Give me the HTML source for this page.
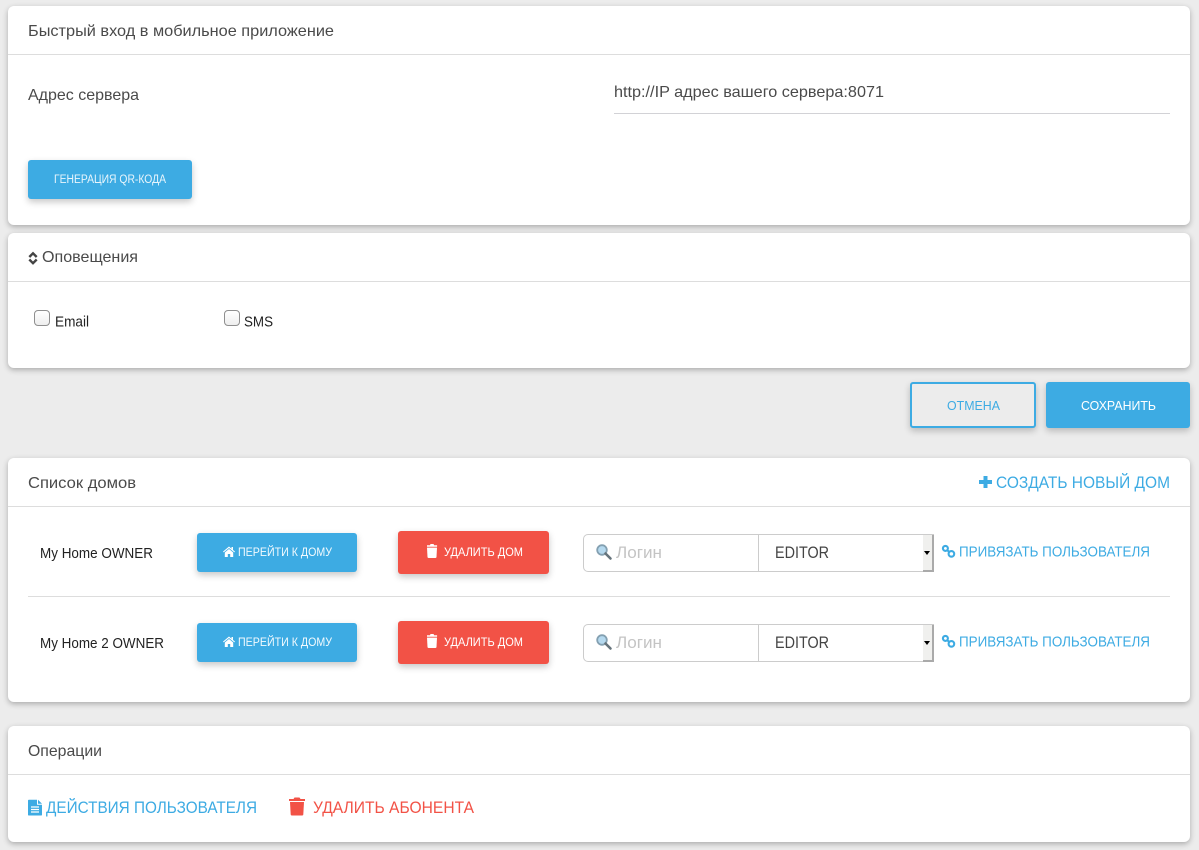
<!DOCTYPE html>
<html lang="ru">
<head>
<meta charset="utf-8">
<title>Настройки</title>
<style>
html,body{margin:0;padding:0;background:#ececec;width:1199px;height:850px;overflow:hidden}
.card{position:absolute;left:8px;width:1182px;background:#fff;border-radius:6px;box-shadow:0 2px 6px rgba(0,0,0,.28)}
.hr{position:absolute;left:0;width:1182px;height:1px;background:#ddd}
.btn{position:absolute;border-radius:3px;background:#3dabe3;box-shadow:0 3px 7px rgba(0,0,0,.22)}
.red{background:#f25246}
.cancel{background:#ececec;border:2px solid #3dabe3;box-sizing:border-box}
.cb{position:absolute;width:14px;height:14px;border:1px solid #8f8f8f;border-radius:4px;background:linear-gradient(#fff,#eee)}
.group{position:absolute;left:583px;width:349px;height:36px;border:1px solid #ccc;border-radius:5px 0 0 5px;background:#fff}
.div{position:absolute;left:174px;top:0;width:1px;height:36px;background:#ccc}
.sb{position:absolute;right:-1px;top:0;width:11px;height:37px;background:#f0f0ee;border-right:2px solid #aaa;border-bottom:2px solid #aaa;box-sizing:border-box}
.sb:after{content:"";position:absolute;left:1px;top:16px;border:3px solid transparent;border-top:4px solid #000;border-bottom:0}
.line{position:absolute;left:28px;width:1142px;height:1px;background:#ddd}
svg{position:absolute;left:0;top:0}
text{font-family:"Liberation Sans","DejaVu Sans",sans-serif}
</style>
</head>
<body>
<div class="card" style="top:6px;height:219px"><div class="hr" style="top:48px"></div></div>
<div class="card" style="top:233px;height:135px"><div class="hr" style="top:48px"></div></div>
<div class="card" style="top:458px;height:244px"><div class="hr" style="top:48px"></div></div>
<div class="card" style="top:726px;height:116px"><div class="hr" style="top:48px"></div></div>

<div style="position:absolute;left:614px;top:113px;width:556px;height:1px;background:#d2d2d6"></div>
<div class="btn" style="left:28px;top:160px;width:164px;height:39px"></div>
<div class="cb" style="left:34px;top:310px"></div>
<div class="cb" style="left:224px;top:310px"></div>
<div class="btn cancel" style="left:910px;top:382px;width:126px;height:46px"></div>
<div class="btn" style="left:1046px;top:382px;width:144px;height:46px"></div>

<div class="btn" style="left:197px;top:533px;width:160px;height:39px"></div>
<div class="btn red" style="left:398px;top:531px;width:151px;height:43px"></div>
<div class="group" style="top:534px"><div class="div"></div><div class="sb"></div></div>
<div class="line" style="top:596px"></div>
<div class="btn" style="left:197px;top:623px;width:160px;height:39px"></div>
<div class="btn red" style="left:398px;top:621px;width:151px;height:43px"></div>
<div class="group" style="top:624px"><div class="div"></div><div class="sb"></div></div>

<svg width="1199" height="850" viewBox="0 0 1199 850" xmlns="http://www.w3.org/2000/svg">
<defs>
<g id="home"><path d="M6 .5 0 5.600l.7.8L6 2l5.300 4.400.7-.8-2-1.700V1H8.500v1.700z" fill="#fff"/><path d="M6 3 1.800 6.500V11h3V8h2.400v3h3V6.500z" fill="#fff"/></g>
<g id="trash"><path d="M3.500 1.300 4.200 0h3.600l.7 1.300H12v1.500H0V1.300z" fill="#fff" transform="translate(1 0) scale(.84 1)"/><path d="M1 3.600h10l-.5 9.400q-.1 1-1.100 1H2.600q-1 0-1.100-1z" fill="#fff"/></g>
<g id="lens"><circle cx="6" cy="6" r="4.800" fill="#b5d9ef" stroke="#84a0b1" stroke-width="1.800"/><path d="M9.500 9.500 14.500 14.500" stroke="#66747c" stroke-width="2.600" stroke-linecap="round"/></g>
<g id="link" fill="none" stroke="#3dabe3" stroke-width="2.100"><circle cx="3.400" cy="3.400" r="2.500"/><circle cx="9.400" cy="8.900" r="2.800"/><path d="M5.200 5.200 7.400 7"/></g>
</defs>

<g fill="#4a4a4a" font-size="16">
<text x="28" y="36" textLength="306" lengthAdjust="spacingAndGlyphs">Быстрый вход в мобильное приложение</text>
<text x="28" y="100" textLength="111" lengthAdjust="spacingAndGlyphs">Адрес сервера</text>
<text x="614" y="97" textLength="270" lengthAdjust="spacingAndGlyphs">http://IP адрес вашего сервера:8071</text>
<text x="42" y="262" textLength="96" lengthAdjust="spacingAndGlyphs">Оповещения</text>
<text x="28" y="488" textLength="108" lengthAdjust="spacingAndGlyphs">Список домов</text>
<text x="28" y="756" textLength="74" lengthAdjust="spacingAndGlyphs">Операции</text>
</g>
<path d="M29.300 257 33 253.300 36.700 257M29.300 259.500 33 263.200 36.700 259.500" fill="none" stroke="#444" stroke-width="2.400"/>

<text x="54" y="183" font-size="11.500" fill="#e8f5fc" textLength="112" lengthAdjust="spacingAndGlyphs">ГЕНЕРАЦИЯ QR-КОДА</text>

<g fill="#222" font-size="15">
<text x="55" y="326.500" textLength="34" lengthAdjust="spacingAndGlyphs">Email</text>
<text x="244" y="326.500" textLength="29" lengthAdjust="spacingAndGlyphs">SMS</text>
<text x="40" y="558" textLength="113" lengthAdjust="spacingAndGlyphs">My Home OWNER</text>
<text x="40" y="648" textLength="124" lengthAdjust="spacingAndGlyphs">My Home 2 OWNER</text>
</g>

<text x="947" y="410" font-size="13" fill="#3dabe3" textLength="53" lengthAdjust="spacingAndGlyphs">ОТМЕНА</text>
<text x="1081" y="410" font-size="13" fill="#fff" textLength="75" lengthAdjust="spacingAndGlyphs">СОХРАНИТЬ</text>

<path d="M983.500 476h4v4h4.500v4h-4.500v4h-4v-4H979v-4h4.500z" fill="#3dabe3"/>
<text x="996" y="488" font-size="17" fill="#3dabe3" textLength="174" lengthAdjust="spacingAndGlyphs">СОЗДАТЬ НОВЫЙ ДОМ</text>

<g id="row1">
<use href="#home" x="223" y="546"/>
<text x="238" y="556" font-size="11.500" fill="#f2fafe" textLength="94" lengthAdjust="spacingAndGlyphs">ПЕРЕЙТИ К ДОМУ</text>
<use href="#trash" x="426" y="544"/>
<text x="444" y="556" font-size="11.500" fill="#fff" textLength="79" lengthAdjust="spacingAndGlyphs">УДАЛИТЬ ДОМ</text>
<use href="#lens" x="596" y="544"/>
<text x="616" y="558" font-size="17" fill="#c4c4c4" textLength="46" lengthAdjust="spacingAndGlyphs">Логин</text>
<text x="775" y="558" font-size="17" fill="#444" textLength="54" lengthAdjust="spacingAndGlyphs">EDITOR</text>
<use href="#link" x="942" y="545"/>
<text x="959" y="556.500" font-size="15" fill="#3dabe3" textLength="191" lengthAdjust="spacingAndGlyphs">ПРИВЯЗАТЬ ПОЛЬЗОВАТЕЛЯ</text>
</g>
<g id="row2">
<use href="#home" x="223" y="636"/>
<text x="238" y="646" font-size="11.500" fill="#f2fafe" textLength="94" lengthAdjust="spacingAndGlyphs">ПЕРЕЙТИ К ДОМУ</text>
<use href="#trash" x="426" y="634"/>
<text x="444" y="646" font-size="11.500" fill="#fff" textLength="79" lengthAdjust="spacingAndGlyphs">УДАЛИТЬ ДОМ</text>
<use href="#lens" x="596" y="634"/>
<text x="616" y="648" font-size="17" fill="#c4c4c4" textLength="46" lengthAdjust="spacingAndGlyphs">Логин</text>
<text x="775" y="648" font-size="17" fill="#444" textLength="54" lengthAdjust="spacingAndGlyphs">EDITOR</text>
<use href="#link" x="942" y="635"/>
<text x="959" y="646.500" font-size="15" fill="#3dabe3" textLength="191" lengthAdjust="spacingAndGlyphs">ПРИВЯЗАТЬ ПОЛЬЗОВАТЕЛЯ</text>
</g>

<path d="M28 800.500q0-.8.8-.8H37v5h5v10q0 .8-.8.8H28.800q-.8 0-.8-.8z" fill="#3dabe3"/>
<path d="M38 799.700 42 803.700H38z" fill="#3dabe3"/>
<path d="M31 807h8M31 809.500h8M31 812h8" stroke="#fff" stroke-width="1.200"/>
<text x="46" y="813" font-size="17" fill="#3dabe3" textLength="211" lengthAdjust="spacingAndGlyphs">ДЕЙСТВИЯ ПОЛЬЗОВАТЕЛЯ</text>
<path d="M293.500 799 294.500 797.500h5l1 1.500h4.500v2h-16v-2z" fill="#f25246"/>
<path d="M290 802h14l-.7 12.500q-.1 1-1.100 1h-10.400q-1 0-1.100-1z" fill="#f25246"/>
<text x="313" y="813" font-size="17" fill="#f25246" textLength="161" lengthAdjust="spacingAndGlyphs">УДАЛИТЬ АБОНЕНТА</text>
</svg>
</body>
</html>
